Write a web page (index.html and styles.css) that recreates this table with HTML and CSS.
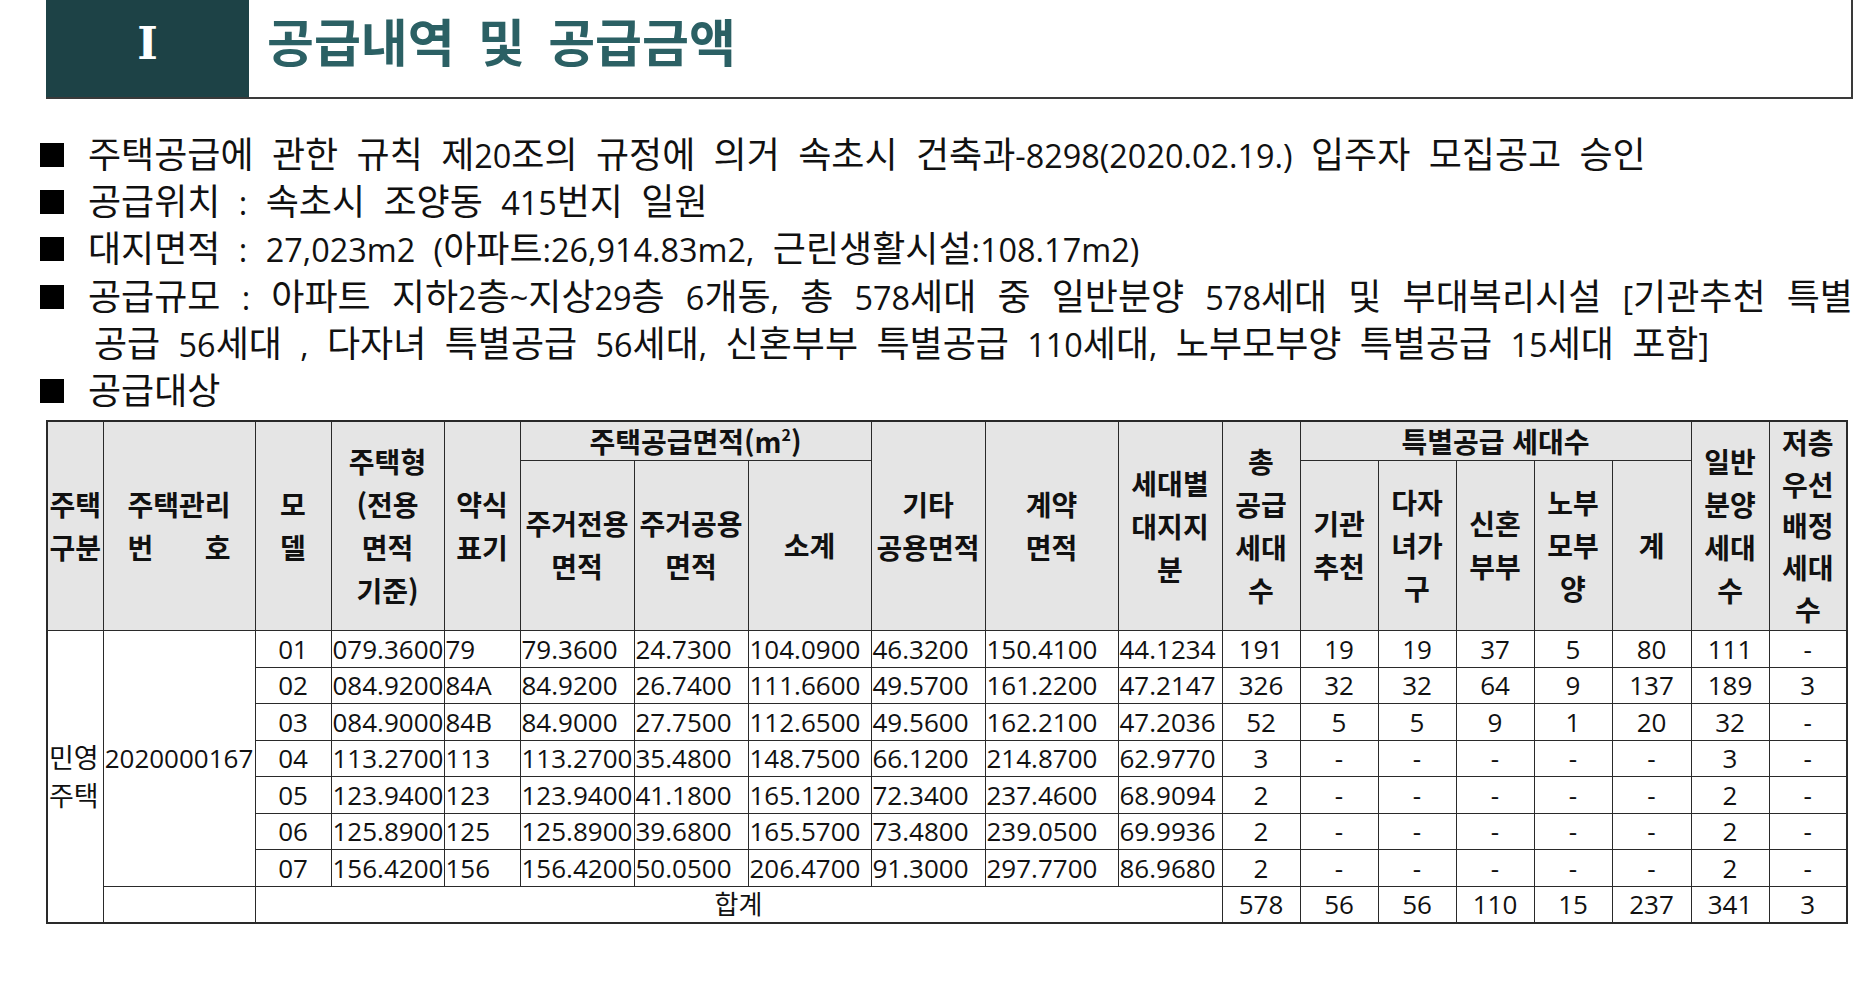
FILE: index.html
```html
<!DOCTYPE html>
<html lang="ko">
<head>
<meta charset="utf-8">
<title>공급내역 및 공급금액</title>
<link rel="stylesheet" href="styles.css">
</head>
<body>
<div class="page">
  <header class="title-bar">
    <div class="num">I</div>
    <h1 class="title">공급내역 및 공급금액</h1>
  </header>

  <ul class="bullets">
    <li><span class="sq"></span><span class="txt">주택공급에 관한 규칙 제<span class="n">20</span>조의 규정에 의거 속초시 건축과<span class="n">-8298(2020.02.19.)</span> 입주자 모집공고 승인</span></li>
    <li><span class="sq"></span><span class="txt">공급위치 <span class="n">:</span> 속초시 조양동 <span class="n">415</span>번지 일원</span></li>
    <li><span class="sq"></span><span class="txt">대지면적 <span class="n">:</span> <span class="n">27,023m2</span> <span class="n">(</span>아파트<span class="n">:26,914.83m2,</span> 근린생활시설<span class="n">:108.17m2)</span></span></li>
    <li><span class="sq"></span><span class="txt"><span class="just">공급규모 <span class="n">:</span> 아파트 지하<span class="n">2</span>층<span class="n">~</span>지상<span class="n">29</span>층 <span class="n">6</span>개동<span class="n">,</span> 총 <span class="n">578</span>세대 중 일반분양 <span class="n">578</span>세대 및 부대복리시설 <span class="n">[</span>기관추천 특별</span><span class="cont">공급 <span class="n">56</span>세대 <span class="n">,</span> 다자녀 특별공급 <span class="n">56</span>세대<span class="n">,</span> 신혼부부 특별공급 <span class="n">110</span>세대<span class="n">,</span> 노부모부양 특별공급 <span class="n">15</span>세대 포함<span class="n">]</span></span></span></li>
    <li><span class="sq"></span><span class="txt">공급대상</span></li>
  </ul>

  <table class="supply">
    <colgroup>
      <col style="width:56px"><col style="width:152px"><col style="width:76px"><col style="width:113px"><col style="width:76px">
      <col style="width:114px"><col style="width:114px"><col style="width:123px"><col style="width:114px"><col style="width:133px">
      <col style="width:104px"><col style="width:78px"><col style="width:78px"><col style="width:78px"><col style="width:78px">
      <col style="width:78px"><col style="width:79px"><col style="width:78px"><col style="width:78px">
    </colgroup>
    <thead>
      <tr class="hr1">
        <th rowspan="2">주택<br>구분</th>
        <th rowspan="2"><div class="idhdr"><div>주택관리</div><div class="spread"><span>번</span><span>호</span></div></div></th>
        <th rowspan="2">모<br>델</th>
        <th rowspan="2">주택형<br>(전용<br>면적<br>기준)</th>
        <th rowspan="2">약식<br>표기</th>
        <th colspan="3">주택공급면적(m<sup>2</sup>)</th>
        <th rowspan="2">기타<br>공용면적</th>
        <th rowspan="2">계약<br>면적</th>
        <th rowspan="2">세대별<br>대지지<br>분</th>
        <th rowspan="2">총<br>공급<br>세대<br>수</th>
        <th colspan="5">특별공급 세대수</th>
        <th rowspan="2" class="tight">일반<br>분양<br>세대<br>수</th>
        <th rowspan="2" class="tight5">저층<br>우선<br>배정<br>세대<br>수</th>
      </tr>
      <tr class="hr2">
        <th>주거전용<br>면적</th>
        <th>주거공용<br>면적</th>
        <th>소계</th>
        <th>기관<br>추천</th>
        <th>다자<br>녀가<br>구</th>
        <th>신혼<br>부부</th>
        <th>노부<br>모부<br>양</th>
        <th>계</th>
      </tr>
    </thead>
    <tbody>
      <tr>
        <td rowspan="8" class="kind">민영<br>주택</td>
        <td rowspan="7" class="c">2020000167</td>
        <td class="c">01</td><td>079.3600</td><td>79</td><td>79.3600</td><td>24.7300</td><td>104.0900</td><td>46.3200</td><td>150.4100</td><td>44.1234</td>
        <td class="c">191</td><td class="c">19</td><td class="c">19</td><td class="c">37</td><td class="c">5</td><td class="c">80</td><td class="c">111</td><td class="c">-</td>
      </tr>
      <tr>
        <td class="c">02</td><td>084.9200</td><td>84A</td><td>84.9200</td><td>26.7400</td><td>111.6600</td><td>49.5700</td><td>161.2200</td><td>47.2147</td>
        <td class="c">326</td><td class="c">32</td><td class="c">32</td><td class="c">64</td><td class="c">9</td><td class="c">137</td><td class="c">189</td><td class="c">3</td>
      </tr>
      <tr>
        <td class="c">03</td><td>084.9000</td><td>84B</td><td>84.9000</td><td>27.7500</td><td>112.6500</td><td>49.5600</td><td>162.2100</td><td>47.2036</td>
        <td class="c">52</td><td class="c">5</td><td class="c">5</td><td class="c">9</td><td class="c">1</td><td class="c">20</td><td class="c">32</td><td class="c">-</td>
      </tr>
      <tr>
        <td class="c">04</td><td>113.2700</td><td>113</td><td>113.2700</td><td>35.4800</td><td>148.7500</td><td>66.1200</td><td>214.8700</td><td>62.9770</td>
        <td class="c">3</td><td class="c">-</td><td class="c">-</td><td class="c">-</td><td class="c">-</td><td class="c">-</td><td class="c">3</td><td class="c">-</td>
      </tr>
      <tr>
        <td class="c">05</td><td>123.9400</td><td>123</td><td>123.9400</td><td>41.1800</td><td>165.1200</td><td>72.3400</td><td>237.4600</td><td>68.9094</td>
        <td class="c">2</td><td class="c">-</td><td class="c">-</td><td class="c">-</td><td class="c">-</td><td class="c">-</td><td class="c">2</td><td class="c">-</td>
      </tr>
      <tr>
        <td class="c">06</td><td>125.8900</td><td>125</td><td>125.8900</td><td>39.6800</td><td>165.5700</td><td>73.4800</td><td>239.0500</td><td>69.9936</td>
        <td class="c">2</td><td class="c">-</td><td class="c">-</td><td class="c">-</td><td class="c">-</td><td class="c">-</td><td class="c">2</td><td class="c">-</td>
      </tr>
      <tr>
        <td class="c">07</td><td>156.4200</td><td>156</td><td>156.4200</td><td>50.0500</td><td>206.4700</td><td>91.3000</td><td>297.7700</td><td>86.9680</td>
        <td class="c">2</td><td class="c">-</td><td class="c">-</td><td class="c">-</td><td class="c">-</td><td class="c">-</td><td class="c">2</td><td class="c">-</td>
      </tr>
      <tr class="total">
        <td></td>
        <td colspan="9" class="c">합계</td>
        <td class="c">578</td><td class="c">56</td><td class="c">56</td><td class="c">110</td><td class="c">15</td><td class="c">237</td><td class="c">341</td><td class="c">3</td>
      </tr>
    </tbody>
  </table>
</div>
</body>
</html>
```

FILE: styles.css
```css
html, body {
  margin: 0;
  padding: 0;
  background: #ffffff;
}

body {
  font-family: "Open Sans", "Noto Sans CJK KR", sans-serif;
  color: #111;
}

.page {
  width: 1807px;
  padding-left: 46px;
}

/* ---------- title bar ---------- */
.title-bar {
  display: flex;
  align-items: flex-start;
  height: 99px;
  box-sizing: border-box;
  border-right: 2px solid #3a3a3a;
  border-bottom: 2px solid #3a3a3a;
}

.num {
  width: 203px;
  height: 97px;
  background: #1d4246;
  color: #ffffff;
  font-family: "DejaVu Serif", serif;
  font-weight: bold;
  font-size: 44px;
  display: flex;
  align-items: center;
  justify-content: center;
  padding-bottom: 10px;
  box-sizing: border-box;
}

.title {
  margin: 0 0 0 18px;
  font-family: "Noto Sans CJK KR", sans-serif;
  font-weight: bold;
  font-size: 51px;
  line-height: 80px;
  color: #2b6064;
  word-spacing: 9px;
}

/* ---------- bullets ---------- */
.bullets {
  list-style: none;
  margin: 32px 0 0 -6px;
  padding: 0;
  font-family: "Open Sans", "Noto Sans CJK KR", sans-serif;
  font-size: 36px;
  line-height: 47.2px;
  word-spacing: 9px;
}

.bullets li {
  display: flex;
  align-items: flex-start;
  height: 47.2px;
}

.bullets li:nth-child(4) {
  height: auto;
}

.bullets .n {
  font-size: 0.9em;
  line-height: 1;
}

.sq {
  flex: none;
  width: 24px;
  height: 24px;
  margin-top: 12px;
  margin-right: 24px;
  background: #000;
}

.txt {
  flex: 1;
  min-width: 0;
}

.just {
  display: block;
  height: 47.2px;
  text-align: justify;
  text-align-last: justify;
  white-space: nowrap;
  word-spacing: 0;
}

.cont {
  display: block;
  height: 47.2px;
  padding-left: 6px;
}

/* ---------- table ---------- */
.supply {
  margin-top: 6px;
  width: 1800px;
  table-layout: fixed;
  border-collapse: collapse;
  border: 2px solid #2a2a2a;
}

.supply th,
.supply td {
  border: 1.5px solid #2a2a2a;
  padding: 0 2px;
  overflow: hidden;
  white-space: nowrap;
}

.supply th {
  background: #e5e5e5;
  font-family: "Noto Sans CJK KR", sans-serif;
  font-weight: bold;
  font-size: 28px;
  line-height: 43px;
  text-align: center;
  vertical-align: middle;
  padding: 0;
}

.supply .hr1 {
  height: 39px;
}

.supply .hr1 th[colspan] {
  line-height: 36px;
}

.supply .hr2 {
  height: 170px;
}

.supply th.tight5 {
  line-height: 41.6px;
}

.supply sup {
  font-size: 16px;
  line-height: 0;
  vertical-align: 12px;
}

.idhdr {
  display: inline-block;
  text-align: left;
}

.spread {
  display: flex;
  justify-content: space-between;
  font-weight: bold;
}

.supply tbody tr {
  height: 36.5px;
}

.supply td {
  font-size: 26px;
  line-height: 34px;
  text-align: left;
  vertical-align: middle;
  padding: 0 1px;
}

.supply td.c {
  text-align: center;
}

.supply td.kind {
  font-family: "Noto Sans CJK KR", sans-serif;
  font-size: 27px;
  line-height: 38px;
  text-align: left;
  padding: 0 0 0 1px;
}
```
